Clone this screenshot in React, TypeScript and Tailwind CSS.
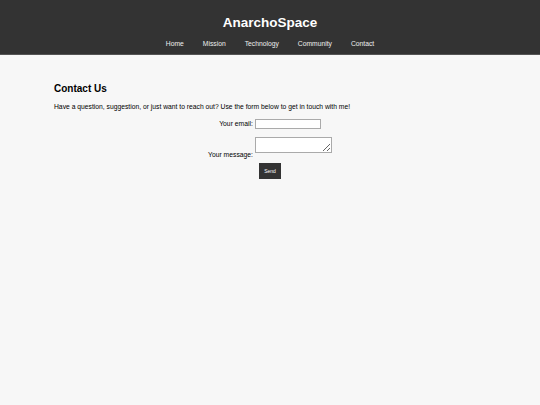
const navItems = ["Home", "Mission", "Technology", "Community", "Contact"];

export default function App() {
  return (
    <div className="min-h-[405px] bg-[#f7f7f7] font-['Liberation_Sans',Arial,sans-serif] text-black">
      <header className="flex h-[55px] flex-col items-center border-b border-[#555] bg-[#333] pt-[15px] text-white">
        <h1 className="text-[13.5px] font-bold leading-[16px]">AnarchoSpace</h1>
        <nav className="mt-[9px] flex gap-[19px] text-[6.75px] leading-[8px] text-[#eee]">
          {navItems.map((item) => (
            <a key={item} href="#">
              {item}
            </a>
          ))}
        </nav>
      </header>

      <main className="px-[54px] pt-[28px]">
        <h2 className="text-[10px] font-bold leading-[12px]">Contact Us</h2>
        <p className="mt-[8px] text-[6.75px] leading-[8px]">
          Have a question, suggestion, or just want to reach out? Use the form
          below to get in touch with me!
        </p>

        <form className="mt-[8px] flex flex-col items-center text-[6.75px] leading-[8px]">
          <div className="flex items-center gap-[2px]">
            <label htmlFor="email">Your email:</label>
            <input
              id="email"
              type="email"
              className="h-[10px] w-[66px] border border-[#aaa] bg-white"
            />
          </div>
          <div className="mt-[8px] flex items-end gap-[2px]">
            <label htmlFor="message" className="-mb-[6px]">
              Your message:
            </label>
            <textarea
              id="message"
              className="h-[16px] w-[77px] border border-[#aaa] bg-white"
            />
          </div>
          <button
            type="submit"
            className="mt-[10px] h-[16px] w-[22px] bg-[#333] text-[5px] text-white"
          >
            Send
          </button>
        </form>
      </main>
    </div>
  );
}
